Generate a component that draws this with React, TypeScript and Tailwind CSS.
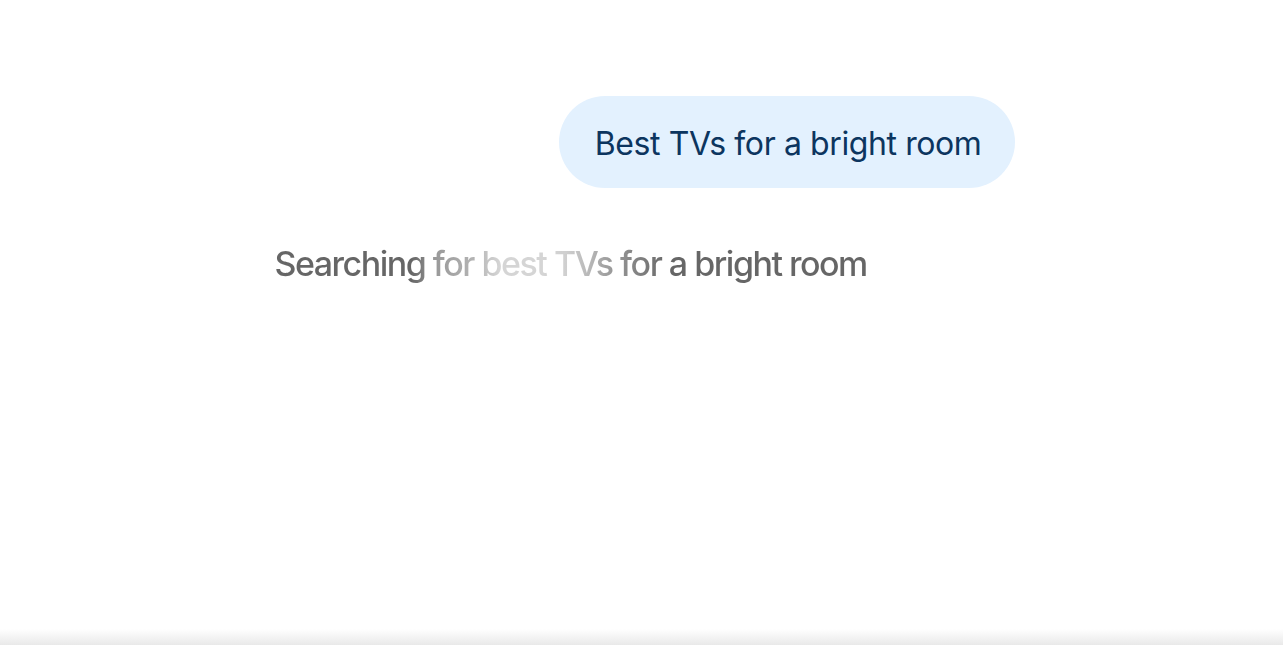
export default function App() {
  return (
    <div
      className="relative h-[645px] w-full overflow-hidden bg-white"
      style={{ fontFamily: 'Inter, "Noto Sans", sans-serif' }}
    >
      <div className="mx-auto flex w-[746px] flex-col pt-[96px]">
        <div className="flex justify-end">
          <div className="flex h-[92px] items-center rounded-full bg-[#e3f1fe] pl-[36px] pr-[33px] pt-[3px] text-[32px] tracking-[-0.4px] text-[#0c355f]">
            Best TVs for a bright room
          </div>
        </div>
        <div className="mt-[50px] pl-[6px]">
          <span className="bg-[linear-gradient(90deg,#666_0%,#666_23%,#999_27%,#b5b5b5_34%,#d5d5d5_38%,#d5d5d5_45%,#d0d0d0_49%,#b8b8b8_53%,#a0a0a0_56%,#888_60%,#666_67%,#666_100%)] bg-clip-text text-[34px] font-medium tracking-[-1.5px] text-transparent">
            Searching for best TVs for a bright room
          </span>
        </div>
      </div>
      <div className="absolute inset-x-0 bottom-0 h-[16px] bg-gradient-to-b from-white/0 to-[#e9e9e9]" />
    </div>
  );
}
